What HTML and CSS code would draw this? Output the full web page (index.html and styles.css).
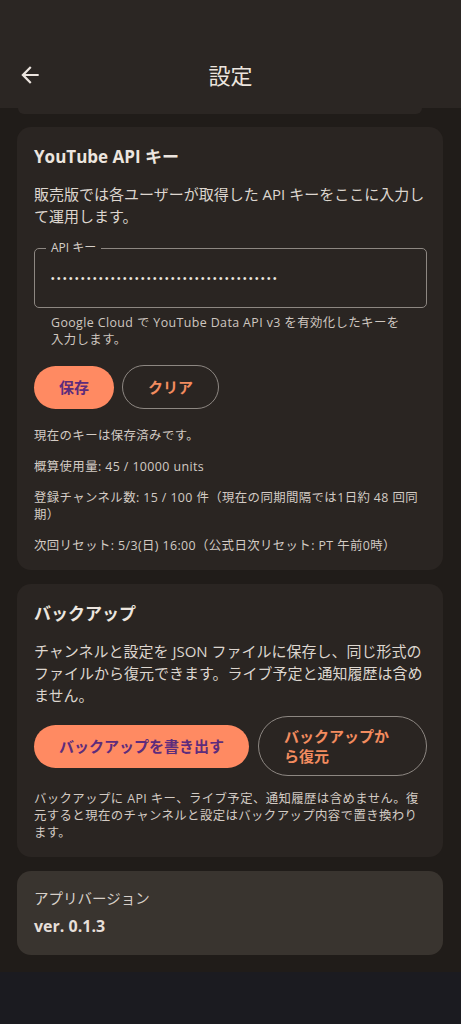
FILE: index.html
```html
<!DOCTYPE html>
<html lang="ja">
<head>
<meta charset="utf-8">
<title>設定</title>
<link rel="stylesheet" href="styles.css">
</head>
<body>
<div class="screen">
  <header class="appbar">
    <div class="appbar-row">
      <button class="back" aria-label="戻る">
        <svg viewBox="0 0 24 24" width="26" height="26"><path d="M20 11H7.83l5.59-5.59L12 4l-8 8 8 8 1.41-1.41L7.83 13H20v-2z" fill="#ece5df"/></svg>
      </button>
      <h1 class="title">設定</h1>
      <span class="spacer"></span>
    </div>
  </header>
  <main class="content">
    <div class="peek"></div>

    <section class="card">
      <h2 class="card-title">YouTube API キー</h2>
      <p class="desc">販売版では各ユーザーが取得した API キーをここに入力して運用します。</p>
      <fieldset class="field">
        <legend>API キー</legend>
        <div class="dots">••••••••••••••••••••••••••••••••••••••</div>
      </fieldset>
      <p class="helper">Google Cloud で YouTube Data API v3 を有効化したキーを入力します。</p>
      <div class="btn-row">
        <button class="btn filled">保存</button>
        <button class="btn outlined">クリア</button>
      </div>
      <div class="notes">
        <p>現在のキーは保存済みです。</p>
        <p>概算使用量: 45 / 10000 units</p>
        <p>登録チャンネル数: 15 / 100 件（現在の同期間隔では1日約 48 回同期）</p>
        <p>次回リセット: 5/3(日) 16:00（公式日次リセット: PT 午前0時）</p>
      </div>
    </section>

    <section class="card">
      <h2 class="card-title">バックアップ</h2>
      <p class="desc">チャンネルと設定を JSON ファイルに保存し、同じ形式のファイルから復元できます。ライブ予定と通知履歴は含めません。</p>
      <div class="btn-row backup-row">
        <button class="btn filled nowrap">バックアップを書き出す</button>
        <button class="btn outlined grow">バックアップから復元</button>
      </div>
      <p class="footnote">バックアップに API キー、ライブ予定、通知履歴は含めません。復元すると現在のチャンネルと設定はバックアップ内容で置き換わります。</p>
    </section>

    <section class="card version">
      <div class="version-label">アプリバージョン</div>
      <div class="version-value">ver. 0.1.3</div>
    </section>
  </main>
  <div class="navbar"></div>
</div>
</body>
</html>
```

FILE: styles.css
```css
* { box-sizing: border-box; }
html, body { margin: 0; padding: 0; }
body {
  width: 461px;
  height: 1024px;
  overflow: hidden;
  background: #1b1b20;
  font-family: "Open Sans", "Noto Sans CJK JP", sans-serif;
  color: #ece5df;
}
.screen { display: flex; flex-direction: column; height: 1024px; }

.appbar {
  background: #2b2623;
  height: 108px;
  padding-top: 52px;
}
.appbar-row {
  display: grid;
  grid-template-columns: 1fr auto 1fr;
  align-items: center;
  height: 46px;
}
.back {
  justify-self: start;
  margin-left: 17px;
  background: none;
  border: 0;
  padding: 0;
  width: 26px;
  height: 26px;
  display: flex;
}
.title {
  margin: 0;
  font-size: 22px;
  font-weight: 400;
  line-height: 28px;
  color: #ece5df;
}

.content {
  background: #201c19;
  padding: 0 18px 17px 17px;
  display: flex;
  flex-direction: column;
  gap: 14px;
}
.peek {
  height: 6px;
  margin: 0 21px -1px 1px;
  background: #2b2623;
  border-radius: 0 0 10px 10px;
}

.card {
  background: #2a2522;
  border-radius: 14px;
  padding: 19px 16px 16px 17px;
}
.card-title {
  margin: 0;
  font-size: 17px;
  font-weight: 700;
  line-height: 22px;
  color: #ece5df;
}
.desc {
  margin: 15px 0 0;
  font-size: 15px;
  line-height: 22px;
  color: #ddd6cf;
}

.field {
  margin: 13px 0 0;
  padding: 0 0 0 11px;
  border: 1px solid #8d8782;
  border-radius: 5px;
  height: 68px;
  min-width: 0;
}
.field legend {
  font-size: 12px;
  line-height: 16px;
  color: #d6cfc8;
  padding: 0 5px;
}
.dots {
  font-family: "Liberation Sans", sans-serif;
  font-size: 10px;
  letter-spacing: 2.5px;
  line-height: 20px;
  margin: 13px 0 0 5px;
  color: #ece5df;
}

.helper {
  margin: 6px 16px 0 17px;
  font-size: 12.4px;
  letter-spacing: 0.4px;
  line-height: 17px;
  color: #cfc7c0;
}

.btn-row {
  display: flex;
  gap: 8px;
  margin-top: 17px;
  align-items: center;
}
.btn {
  font-family: inherit;
  font-size: 15px;
  font-weight: 700;
  line-height: 20px;
  border-radius: 999px;
  padding: 11px 25px;
  min-height: 43px;
}
.filled {
  background: #ff8a62;
  color: #5d2c7c;
  border: 0;
}
.outlined {
  background: transparent;
  color: #f38c5f;
  border: 1px solid #8d8782;
}
.nowrap { white-space: nowrap; flex: none; }
.grow { flex: 1; min-width: 0; text-align: left; padding: 9px 25px; }
.backup-row { margin-top: 10px; gap: 9px; }

.notes {
  margin-top: 18px;
  display: flex;
  flex-direction: column;
  gap: 14px;
}
.notes p, .footnote {
  margin: 0;
  font-size: 12.4px;
  letter-spacing: 0.4px;
  line-height: 17px;
  color: #d3cbc4;
}
.footnote { margin-top: 14px; }

.card.version {
  background: #39342f;
  padding: 18px 17px 18px 17px;
}
.version-label {
  font-size: 14.5px;
  line-height: 20px;
  color: #d6cfc8;
}
.version-value {
  margin-top: 6px;
  font-size: 16px;
  font-weight: 700;
  line-height: 22px;
  color: #e6dfd9;
}

.navbar { flex: 1; background: #1b1b20; }
```
